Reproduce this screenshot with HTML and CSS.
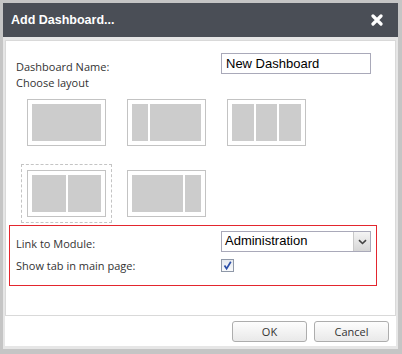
FILE: index.html
```html
<!DOCTYPE html>
<html lang="en">
<head>
  <meta charset="UTF-8" />
  <title>Add Dashboard</title>
  <link rel="stylesheet" href="styles.css">
</head>
<body>
  <div class="dialog">
    <div class="dialog-title">
      <span>Add Dashboard...</span>
      <svg class="close-icon" width="12" height="12" viewBox="0 0 12 12">
        <path d="M2 2 L10 10 M10 2 L2 10" stroke="#fff" stroke-width="3.2" stroke-linecap="round" />
      </svg>
    </div>

    <div class="dialog-body">
      <div class="panel">
        <div class="name-row">
          <label class="field-label">Dashboard Name:</label>
          <input class="text-input" type="text" value="New Dashboard" />
        </div>
        <div class="section-label">Choose layout</div>

        <div class="layouts">
          <div class="layout-option">
            <div class="thumb"><span class="cell"></span></div>
          </div>
          <div class="layout-option">
            <div class="thumb"><span class="cell narrow"></span><span class="cell"></span></div>
          </div>
          <div class="layout-option">
            <div class="thumb"><span class="cell"></span><span class="cell"></span><span class="cell"></span></div>
          </div>
          <div class="layout-option selected">
            <div class="thumb"><span class="cell"></span><span class="cell"></span></div>
          </div>
          <div class="layout-option">
            <div class="thumb"><span class="cell"></span><span class="cell narrow"></span></div>
          </div>
        </div>

        <div class="module-box">
          <div class="form-row">
            <label class="field-label">Link to Module:</label>
            <div class="select">
              <span class="select-text">Administration</span>
              <span class="select-arrow">
                <svg width="9" height="6" viewBox="0 0 9 6">
                  <path d="M1 1.2 L4.5 4.5 L8 1.2" fill="none" stroke="#444" stroke-width="1.6" />
                </svg>
              </span>
            </div>
          </div>
          <div class="form-row check-row">
            <label class="field-label">Show tab in main page:</label>
            <span class="checkbox">
              <svg width="11" height="11" viewBox="0 0 11 11">
                <path d="M2.5 5.5 L4.6 8.6 L8.8 1.8" fill="none" stroke="#2c4fa8" stroke-width="1.7" />
              </svg>
            </span>
          </div>
        </div>
      </div>

      <div class="dialog-footer">
        <button class="btn">OK</button>
        <button class="btn">Cancel</button>
      </div>
    </div>
  </div>
</body>
</html>
```

FILE: styles.css
```css
* {
  box-sizing: border-box;
  margin: 0;
  padding: 0;
}

body {
  background: #c5c5c5;
  font-family: 'Open Sans', 'Noto Sans', sans-serif;
  font-size: 11px;
  color: #333;
}

.dialog {
  margin: 3px 0 0 3px;
  width: 395px;
  background: #fff;
}

.dialog-title {
  height: 34px;
  background: #4a4e56;
  color: #fff;
  font-family: 'Liberation Sans', Arial, sans-serif;
  font-weight: bold;
  font-size: 12.5px;
  display: flex;
  align-items: center;
  justify-content: space-between;
  padding: 0 15px 0 8px;
}

.close-icon {
  display: block;
}

.dialog-body {
  border: 2px solid #e6e6e6;
  border-top-width: 3px;
  border-bottom-width: 3px;
}

.panel {
  border: 1px solid #d9d9d9;
  height: 276px;
}

.name-row {
  display: flex;
  padding: 12px 0 0 10px;
}

.field-label {
  flex: 0 0 205px;
  line-height: 16px;
  margin-top: 6px;
}

.text-input {
  width: 150px;
  height: 21px;
  border: 1px solid #a9a9b9;
  padding: 0 4px;
  font-family: 'Liberation Sans', Arial, sans-serif;
  font-size: 13px;
  color: #000;
  outline: none;
}

.section-label {
  padding-left: 10px;
  line-height: 16px;
}

.layouts {
  display: grid;
  grid-template-columns: repeat(3, 91px);
  column-gap: 9px;
  row-gap: 12px;
  margin: 2px 0 0 15px;
}

.layout-option {
  border: 1px solid transparent;
  padding: 5px;
}

.layout-option.selected {
  border: 1px dashed #c4c4c4;
}

.thumb {
  width: 79px;
  height: 47px;
  border: 1px solid #c3c3c3;
  padding: 4px;
  display: flex;
  gap: 2px;
}

.cell {
  flex: 1;
  background: #cccccc;
}

.cell.narrow {
  flex: 0 0 16px;
}

.module-box {
  margin: 2px 0 0 3px;
  width: 368px;
  border: 1px solid #e3262e;
  padding: 5px 0 11px 6px;
}

.form-row {
  display: flex;
}

.form-row .field-label {
  margin-top: 5px;
}

.check-row {
  margin-top: 6px;
}

.check-row .field-label {
  margin-top: 0;
}

.select {
  width: 150px;
  height: 21px;
  border: 1px solid #a9a9b9;
  display: flex;
  font-family: 'Liberation Sans', Arial, sans-serif;
  font-size: 13px;
  color: #000;
}

.select-text {
  flex: 1;
  padding: 1px 0 0 3px;
}

.select-arrow {
  width: 17px;
  border-left: 1px solid #c9c9c9;
  background: linear-gradient(#f4f4f4, #d6d6d6);
  display: flex;
  align-items: center;
  justify-content: center;
}

.checkbox {
  width: 13px;
  height: 13px;
  margin-top: 1px;
  border: 1px solid #8f98a8;
  background: linear-gradient(#e4e8ee, #fafbfc);
  display: flex;
  align-items: center;
  justify-content: center;
}

.dialog-footer {
  height: 30px;
  display: flex;
  justify-content: flex-end;
  gap: 7px;
  padding: 5px 7px 0 0;
}

.btn {
  width: 75px;
  height: 21px;
  border: 1px solid #adadad;
  border-radius: 3px;
  background: linear-gradient(#fdfdfd, #e9e9e9);
  font-family: 'Open Sans', 'Noto Sans', sans-serif;
  font-size: 11px;
  color: #333;
  cursor: pointer;
}
```
